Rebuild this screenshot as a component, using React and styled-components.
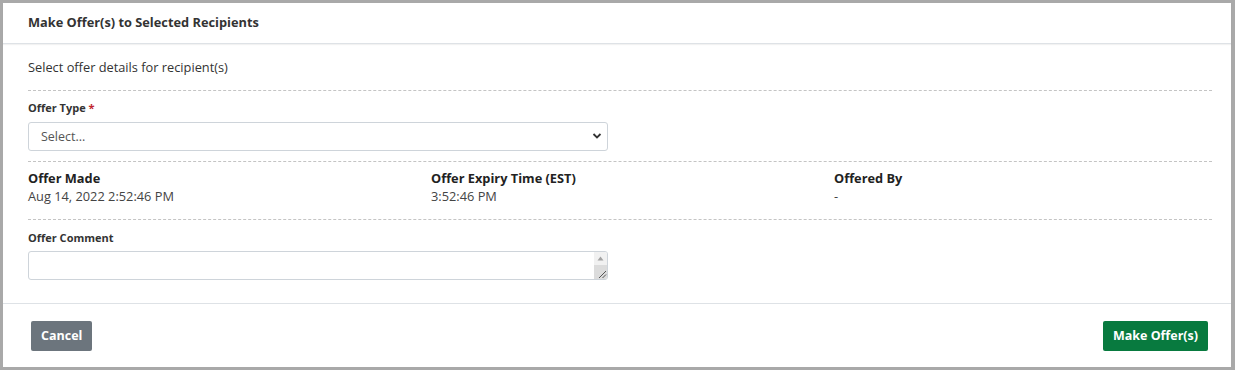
import React from 'react';
import styled, { createGlobalStyle } from 'styled-components';

const GlobalStyle = createGlobalStyle`
  html, body {
    margin: 0;
    padding: 0;
    background: #ffffff;
  }
  body {
    font-family: 'Open Sans', 'Noto Sans', sans-serif;
    color: #333333;
  }
`;

const Frame = styled.div`
  box-sizing: border-box;
  width: 1235px;
  height: 370px;
  border: 3px solid #a9a9a9;
  border-right-width: 4px;
  background: #ffffff;
  display: flex;
  flex-direction: column;
`;

const Header = styled.div`
  height: 40px;
  padding: 0 25px;
  display: flex;
  align-items: center;
  border-bottom: 1px solid #dee2e6;
  box-shadow: 0 1px 1px rgba(0, 0, 0, 0.05);
`;

const Title = styled.h5`
  margin: 0 0 2px;
  font-size: 12.8px;
  font-weight: 700;
  color: #333333;
`;

const Body = styled.div`
  flex: 1;
  padding: 14px 19px 0 25px;
`;

const Intro = styled.p`
  margin: 0;
  font-size: 12.8px;
  line-height: 18px;
  padding-bottom: 14px;
  border-bottom: 1px dashed #c4c4c4;
`;

const Section = styled.div`
  padding: ${(p) => p.$pad || '9px 0 10px'};
  border-bottom: ${(p) => (p.$last ? 'none' : '1px dashed #c4c4c4')};
`;

const FieldLabel = styled.label`
  display: block;
  font-size: 11px;
  font-weight: 700;
  line-height: 16px;
  color: #333333;
  margin-bottom: ${(p) => p.$gap || '6px'};
`;

const Required = styled.span`
  color: #c0262d;
`;

const FieldWrap = styled.div`
  position: relative;
  width: 580px;
`;

const SelectBox = styled.select`
  box-sizing: border-box;
  width: 100%;
  height: 29px;
  padding: 0 12px;
  font-family: inherit;
  font-size: 12.5px;
  color: #555555;
  background: #ffffff;
  border: 1px solid #ced4da;
  border-radius: 3px;
  appearance: none;
  outline: none;
`;

const Chevron = styled.svg`
  position: absolute;
  right: 6px;
  top: 10px;
  pointer-events: none;
`;

const InfoGrid = styled.div`
  display: grid;
  grid-template-columns: repeat(3, 1fr);
  column-gap: 25px;
`;

const InfoTitle = styled.div`
  font-size: 12.8px;
  font-weight: 700;
  line-height: 18px;
  color: #222222;
`;

const InfoValue = styled.div`
  font-size: 12.8px;
  line-height: 18px;
  color: #444444;
`;

const CommentBox = styled.textarea`
  box-sizing: border-box;
  display: block;
  width: 100%;
  height: 29px;
  padding: 4px 16px 4px 8px;
  border: 1px solid #ced4da;
  border-radius: 3px;
  font-family: inherit;
  font-size: 12px;
  resize: none;
  outline: none;
`;

const ScrollTrack = styled.div`
  position: absolute;
  top: 1px;
  right: 1px;
  bottom: 1px;
  width: 13px;
  display: flex;
  flex-direction: column;
  pointer-events: none;
  border-radius: 0 2px 2px 0;
  overflow: hidden;
`;

const TrackTop = styled.div`
  height: 13px;
  background: #f1f1f1;
  display: flex;
  align-items: center;
  justify-content: center;
`;

const TrackGrip = styled.div`
  flex: 1;
  background: #dcdcdc;
  display: flex;
  align-items: flex-end;
  justify-content: flex-end;
`;

const Footer = styled.div`
  height: 63px;
  padding: 0 23px 0 28px;
  border-top: 1px solid #dee2e6;
  display: flex;
  align-items: center;
  justify-content: space-between;
`;

const Button = styled.button`
  height: 30px;
  padding: 0 10px;
  border: none;
  border-radius: 2px;
  font-family: inherit;
  font-size: 12.5px;
  font-weight: 700;
  color: #ffffff;
  background: ${(p) => (p.$primary ? '#087a3f' : '#6c757d')};
  cursor: pointer;
`;

export default function App() {
  return (
    <>
      <GlobalStyle />
      <Frame>
        <Header>
          <Title>Make Offer(s) to Selected Recipients</Title>
        </Header>
        <Body>
          <Intro>Select offer details for recipient(s)</Intro>
          <Section>
            <FieldLabel>
              Offer Type <Required>*</Required>
            </FieldLabel>
            <FieldWrap>
              <SelectBox defaultValue="">
                <option value="">Select...</option>
              </SelectBox>
              <Chevron width="10" height="8" viewBox="0 0 10 8">
                <path d="M1.5 2 L5 5.5 L8.5 2" fill="none" stroke="#333" strokeWidth="1.8" />
              </Chevron>
            </FieldWrap>
          </Section>
          <Section $pad="7px 0 14px">
            <InfoGrid>
              <div>
                <InfoTitle>Offer Made</InfoTitle>
                <InfoValue>Aug 14, 2022 2:52:46 PM</InfoValue>
              </div>
              <div>
                <InfoTitle>Offer Expiry Time (EST)</InfoTitle>
                <InfoValue>3:52:46 PM</InfoValue>
              </div>
              <div>
                <InfoTitle>Offered By</InfoTitle>
                <InfoValue>-</InfoValue>
              </div>
            </InfoGrid>
          </Section>
          <Section $last $pad="10px 0 10px">
            <FieldLabel $gap="5px">Offer Comment</FieldLabel>
            <FieldWrap>
              <CommentBox />
              <ScrollTrack>
                <TrackTop>
                  <svg width="7" height="5" viewBox="0 0 7 5">
                    <path d="M3.5 0.5 L6.5 4.5 L0.5 4.5 Z" fill="#a3a3a3" />
                  </svg>
                </TrackTop>
                <TrackGrip>
                  <svg width="11" height="11" viewBox="0 0 11 11">
                    <path d="M10 3 L3 10 M10 6.5 L6.5 10" stroke="#555" strokeWidth="1" />
                  </svg>
                </TrackGrip>
              </ScrollTrack>
            </FieldWrap>
          </Section>
        </Body>
        <Footer>
          <Button>Cancel</Button>
          <Button $primary>Make Offer(s)</Button>
        </Footer>
      </Frame>
    </>
  );
}
